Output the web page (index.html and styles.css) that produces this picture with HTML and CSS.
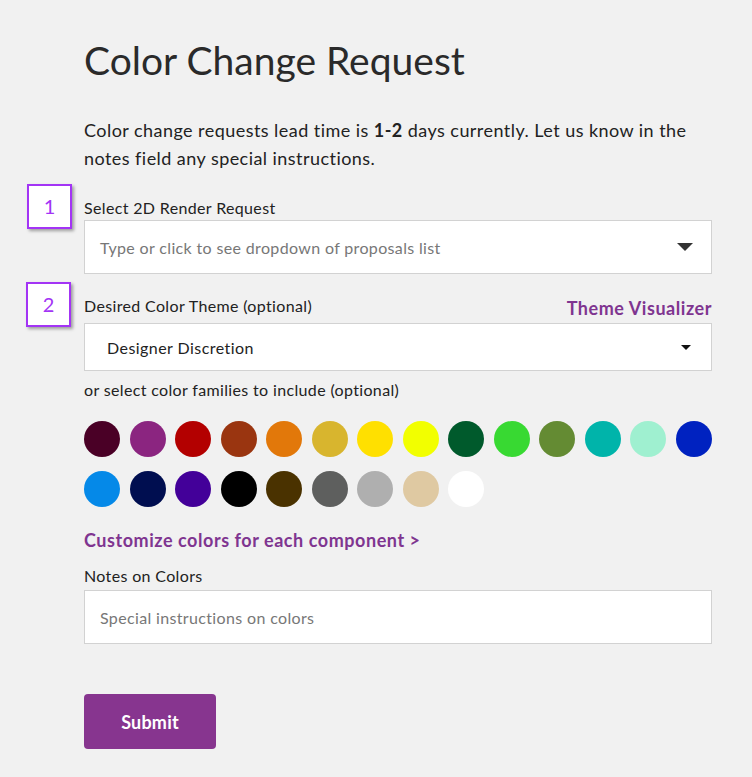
FILE: index.html
```html
<!DOCTYPE html>
<html lang="en">
<head>
  <meta charset="UTF-8" />
  <meta name="viewport" content="width=device-width, initial-scale=1.0"/>
  <title>Color Change Request</title>
  <link rel="stylesheet" href="styles.css">
</head>
<body>
  <div class="page">
    <h1>Color Change Request</h1>
    <p class="intro">Color change requests lead time is <strong>1-2</strong> days currently. Let us know in the notes field any special instructions.</p>

    <div class="field field-render">
      <span class="step">1</span>
      <label class="label">Select 2D Render Request</label>
      <div class="box box-big">
        <span class="placeholder">Type or click to see dropdown of proposals list</span>
        <span class="arrow arrow-big"></span>
      </div>
    </div>

    <div class="field field-theme">
      <span class="step">2</span>
      <div class="label-row">
        <label class="label">Desired Color Theme (optional)</label>
        <a class="link" href="#">Theme Visualizer</a>
      </div>
      <div class="box box-select">
        <span class="value">Designer Discretion</span>
        <span class="arrow arrow-small"></span>
      </div>
      <div class="hint">or select color families to include (optional)</div>
    </div>

    <div class="swatches" id="swatches"></div>

    <a class="link link-custom" href="#">Customize colors for each component &gt;</a>

    <div class="field field-notes">
      <label class="label">Notes on Colors</label>
      <div class="box box-big">
        <span class="placeholder">Special instructions on colors</span>
      </div>
    </div>

    <button class="submit">Submit</button>
  </div>

  <script>
    const colors = [
      "#4a0026", "#8b2580", "#b30000", "#9a3510", "#e2780a", "#d8b52e", "#ffe000",
      "#f2ff00", "#005a2c", "#38d932", "#648b33", "#00b4aa", "#9ff0d0", "#0022c0",
      "#0589e8", "#000e50", "#430099", "#000000", "#4a3200", "#5e5f5e", "#afafaf",
      "#dfc9a2", "#ffffff"
    ];
    const wrap = document.getElementById("swatches");
    for (const c of colors) {
      const dot = document.createElement("span");
      dot.className = "swatch";
      dot.style.background = c;
      wrap.appendChild(dot);
    }
  </script>
</body>
</html>
```

FILE: styles.css
```css
body {
  margin: 0;
  background-color: #f1f1f1;
  color: #222;
  font-family: 'Lato', 'Open Sans', sans-serif;
  letter-spacing: 0.35px;
}
.page {
  width: 628px;
  margin-left: 84px;
  padding-top: 36px;
  padding-bottom: 28px;
}
h1 {
  margin: 0;
  font-size: 39px;
  line-height: 48px;
  font-weight: 400;
  letter-spacing: 0;
  color: #2a2a2a;
}
.intro {
  margin: 32px 0 0;
  font-size: 18px;
  line-height: 28px;
  letter-spacing: 0.45px;
}
.intro strong {
  font-weight: 700;
}
.field {
  position: relative;
}
.field-render {
  margin-top: 25px;
}
.field-theme {
  margin-top: 21px;
}
.step {
  position: absolute;
  left: -57px;
  top: -13px;
  width: 41px;
  height: 41px;
  border: 2px solid #a334f5;
  background: #fff;
  color: #a334f5;
  font-size: 20px;
  line-height: 41px;
  text-align: center;
  letter-spacing: 0;
  box-shadow: 2px 2px 3px rgba(0, 0, 0, 0.35);
}
.field-theme .step {
  top: -13px;
  left: -58px;
}
.label {
  display: block;
  font-size: 16px;
  line-height: 22px;
  margin-bottom: 1px;
}
.label-row {
  display: flex;
  justify-content: space-between;
  align-items: flex-end;
  margin-bottom: 6px;
}
.label-row .label {
  margin-bottom: 0;
}
.link {
  color: #7f3590;
  font-weight: 700;
  font-size: 18px;
  letter-spacing: 0.55px;
  text-decoration: none;
}
.label-row .link {
  line-height: 22px;
  position: relative;
  top: 2px;
}
.box {
  box-sizing: border-box;
  display: flex;
  align-items: center;
  justify-content: space-between;
  background: #fff;
  border: 1px solid #d2d2d2;
}
.box-big {
  height: 54px;
  padding: 0 18px 0 15px;
}
.box-select {
  height: 48px;
  padding: 0 19px 0 22px;
}
.placeholder {
  color: #777;
  font-size: 16px;
}
.value {
  font-size: 16px;
  letter-spacing: 0.45px;
  color: #222;
}
.arrow {
  width: 0;
  height: 0;
  border-style: solid;
  border-color: #333 transparent transparent transparent;
}
.arrow-big {
  border-width: 8px 8px 0 8px;
}
.arrow-small {
  border-width: 5px 5.5px 0 5.5px;
  border-top-color: #111;
  margin-right: 1px;
}
.hint {
  margin-top: 8px;
  font-size: 16px;
  line-height: 22px;
}
.swatches {
  display: grid;
  grid-template-columns: repeat(14, 36px);
  justify-content: space-between;
  row-gap: 14px;
  margin-top: 20px;
}
.swatch {
  width: 36px;
  height: 36px;
  border-radius: 50%;
}
.link-custom {
  display: block;
  margin-top: 21px;
  line-height: 24px;
}
.field-notes {
  margin-top: 13px;
}
.field-notes .label {
  margin-bottom: 3px;
}
.submit {
  margin-top: 50px;
  width: 132px;
  height: 55px;
  border: none;
  border-radius: 4px;
  background-color: #87358f;
  color: #fff;
  font-family: inherit;
  font-size: 18px;
  font-weight: 700;
  letter-spacing: 0.2px;
  cursor: pointer;
}
```
